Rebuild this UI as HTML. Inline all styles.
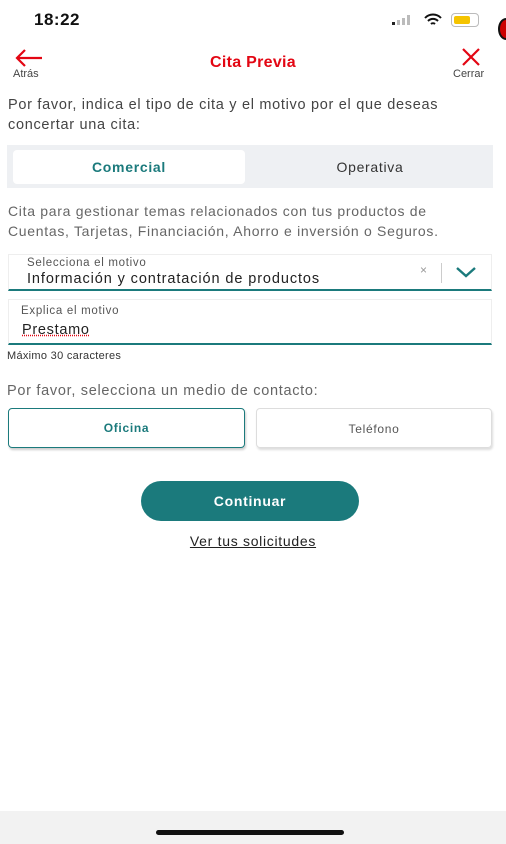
<!DOCTYPE html>
<html><head><meta charset="utf-8"><style>
*{margin:0;padding:0;box-sizing:border-box}
body{width:506px;height:844px;background:#fff;font-family:"Liberation Sans",sans-serif;position:relative;overflow:hidden;color:#333;letter-spacing:0.7px}
.a{position:absolute}
</style></head><body>
<div class="a" style="left:34px;top:10px;font-size:17px;font-weight:bold;color:#111;letter-spacing:0.5px">18:22</div>
<div class="a" style="left:392px;top:15px;width:24px;height:10px">
<div class="a" style="left:0;top:7px;width:3px;height:3px;background:#222"></div>
<div class="a" style="left:5px;top:5px;width:3px;height:5px;background:#bbb"></div>
<div class="a" style="left:10px;top:3px;width:3px;height:7px;background:#bbb"></div>
<div class="a" style="left:15px;top:0;width:3px;height:10px;background:#bbb"></div>
</div>
<svg class="a" style="left:424px;top:13px" width="18" height="14" viewBox="0 0 18 14"><path d="M1 5a11 11 0 0 1 16 0M4 8a7 7 0 0 1 10 0M7 11a3 3 0 0 1 4 0" stroke="#111" stroke-width="2" fill="none"/></svg>
<div class="a" style="left:451px;top:13px;width:28px;height:14px;border:1.5px solid #bbb;border-radius:4px;padding:1.5px"><div style="width:16px;height:8px;background:#f5c400;border-radius:2px"></div></div>
<div class="a" style="left:498px;top:18px;width:16px;height:22px;border-radius:50%;background:#c00;border:2px solid #111"></div>
<svg class="a" style="left:14px;top:48px" width="30" height="20" viewBox="0 0 30 20"><path d="M28 10H3M11 2L3 10l8 8" stroke="#e30613" stroke-width="2.2" fill="none"/></svg>
<div class="a" style="left:13px;top:68px;font-size:11px;color:#444;letter-spacing:0">Atrás</div>
<div class="a" style="left:0;width:506px;top:54px;text-align:center;font-size:16px;font-weight:bold;color:#e30613;letter-spacing:0.3px">Cita Previa</div>
<svg class="a" style="left:461px;top:48px" width="20" height="18" viewBox="0 0 20 18"><path d="M2 1l16 16M18 1L2 17" stroke="#e30613" stroke-width="2.2"/></svg>
<div class="a" style="left:453px;top:68px;font-size:11px;color:#444;letter-spacing:0">Cerrar</div>
<div class="a" style="left:8px;top:95px;width:470px;font-size:14.5px;line-height:20px;color:#444">Por favor, indica el tipo de cita y el motivo por el que deseas concertar una cita:</div>
<div class="a" style="left:7px;top:145px;width:486px;height:43px;background:#eef0f3"></div>
<div class="a" style="left:13px;top:150px;width:232px;height:34px;background:#fff;border-radius:4px;text-align:center;line-height:34px;font-size:14px;font-weight:bold;color:#1b7a7c">Comercial</div>
<div class="a" style="left:248px;top:150px;width:244px;line-height:34px;text-align:center;font-size:14px;color:#333">Operativa</div>
<div class="a" style="left:8px;top:201px;width:478px;font-size:14px;line-height:20px;color:#666">Cita para gestionar temas relacionados con tus productos de Cuentas, Tarjetas, Financiación, Ahorro e inversión o Seguros.</div>
<div class="a" style="left:8px;top:254px;width:484px;height:37px;border:1px solid #eee;border-bottom:2px solid #1b7a7c"></div>
<div class="a" style="left:27px;top:257px;font-size:11.5px;color:#555">Selecciona el motivo</div>
<div class="a" style="left:27px;top:271px;font-size:14.5px;color:#222;letter-spacing:0.9px">Información y contratación de productos</div>
<div class="a" style="left:420px;top:263px;font-size:12px;color:#999">×</div>
<div class="a" style="left:441px;top:263px;width:1px;height:20px;background:#ccc"></div>
<svg class="a" style="left:455px;top:266px" width="22" height="12" viewBox="0 0 22 12"><path d="M2 2l9 8 9-8" stroke="#1b7a7c" stroke-width="2.4" fill="none"/></svg>
<div class="a" style="left:8px;top:299px;width:484px;height:46px;border:1px solid #eee;border-bottom:2px solid #1b7a7c"></div>
<div class="a" style="left:21px;top:305px;font-size:11.5px;color:#555">Explica el motivo</div>
<div class="a" style="left:22px;top:322px;font-size:14.5px;color:#222;text-decoration:underline dotted #e30613">Prestamo</div>
<div class="a" style="left:7px;top:350px;font-size:11px;color:#333;letter-spacing:0.3px">Máximo 30 caracteres</div>
<div class="a" style="left:7px;top:383px;font-size:14.5px;color:#666">Por favor, selecciona un medio de contacto:</div>
<div class="a" style="left:8px;top:408px;width:237px;height:40px;border:1.5px solid #1b7a7c;border-radius:4px;box-shadow:1px 2px 2px #ccc;text-align:center;line-height:38px;font-size:12px;font-weight:bold;color:#1b7a7c">Oficina</div>
<div class="a" style="left:256px;top:408px;width:236px;height:40px;border:1px solid #ddd;border-radius:4px;box-shadow:1px 2px 2px #ddd;text-align:center;line-height:40px;font-size:12px;color:#555">Teléfono</div>
<div class="a" style="left:141px;top:481px;width:218px;height:40px;border-radius:20px;background:#1b7a7c;text-align:center;line-height:40px;font-size:14px;font-weight:bold;color:#fff">Continuar</div>
<div class="a" style="left:0;width:506px;top:533px;text-align:center;font-size:14px;color:#222;text-decoration:underline">Ver tus solicitudes</div>
<div class="a" style="left:0;top:811px;width:506px;height:33px;background:#f2f2f2"></div>
<div class="a" style="left:156px;top:830px;width:188px;height:5px;border-radius:3px;background:#111"></div>
</body></html>
